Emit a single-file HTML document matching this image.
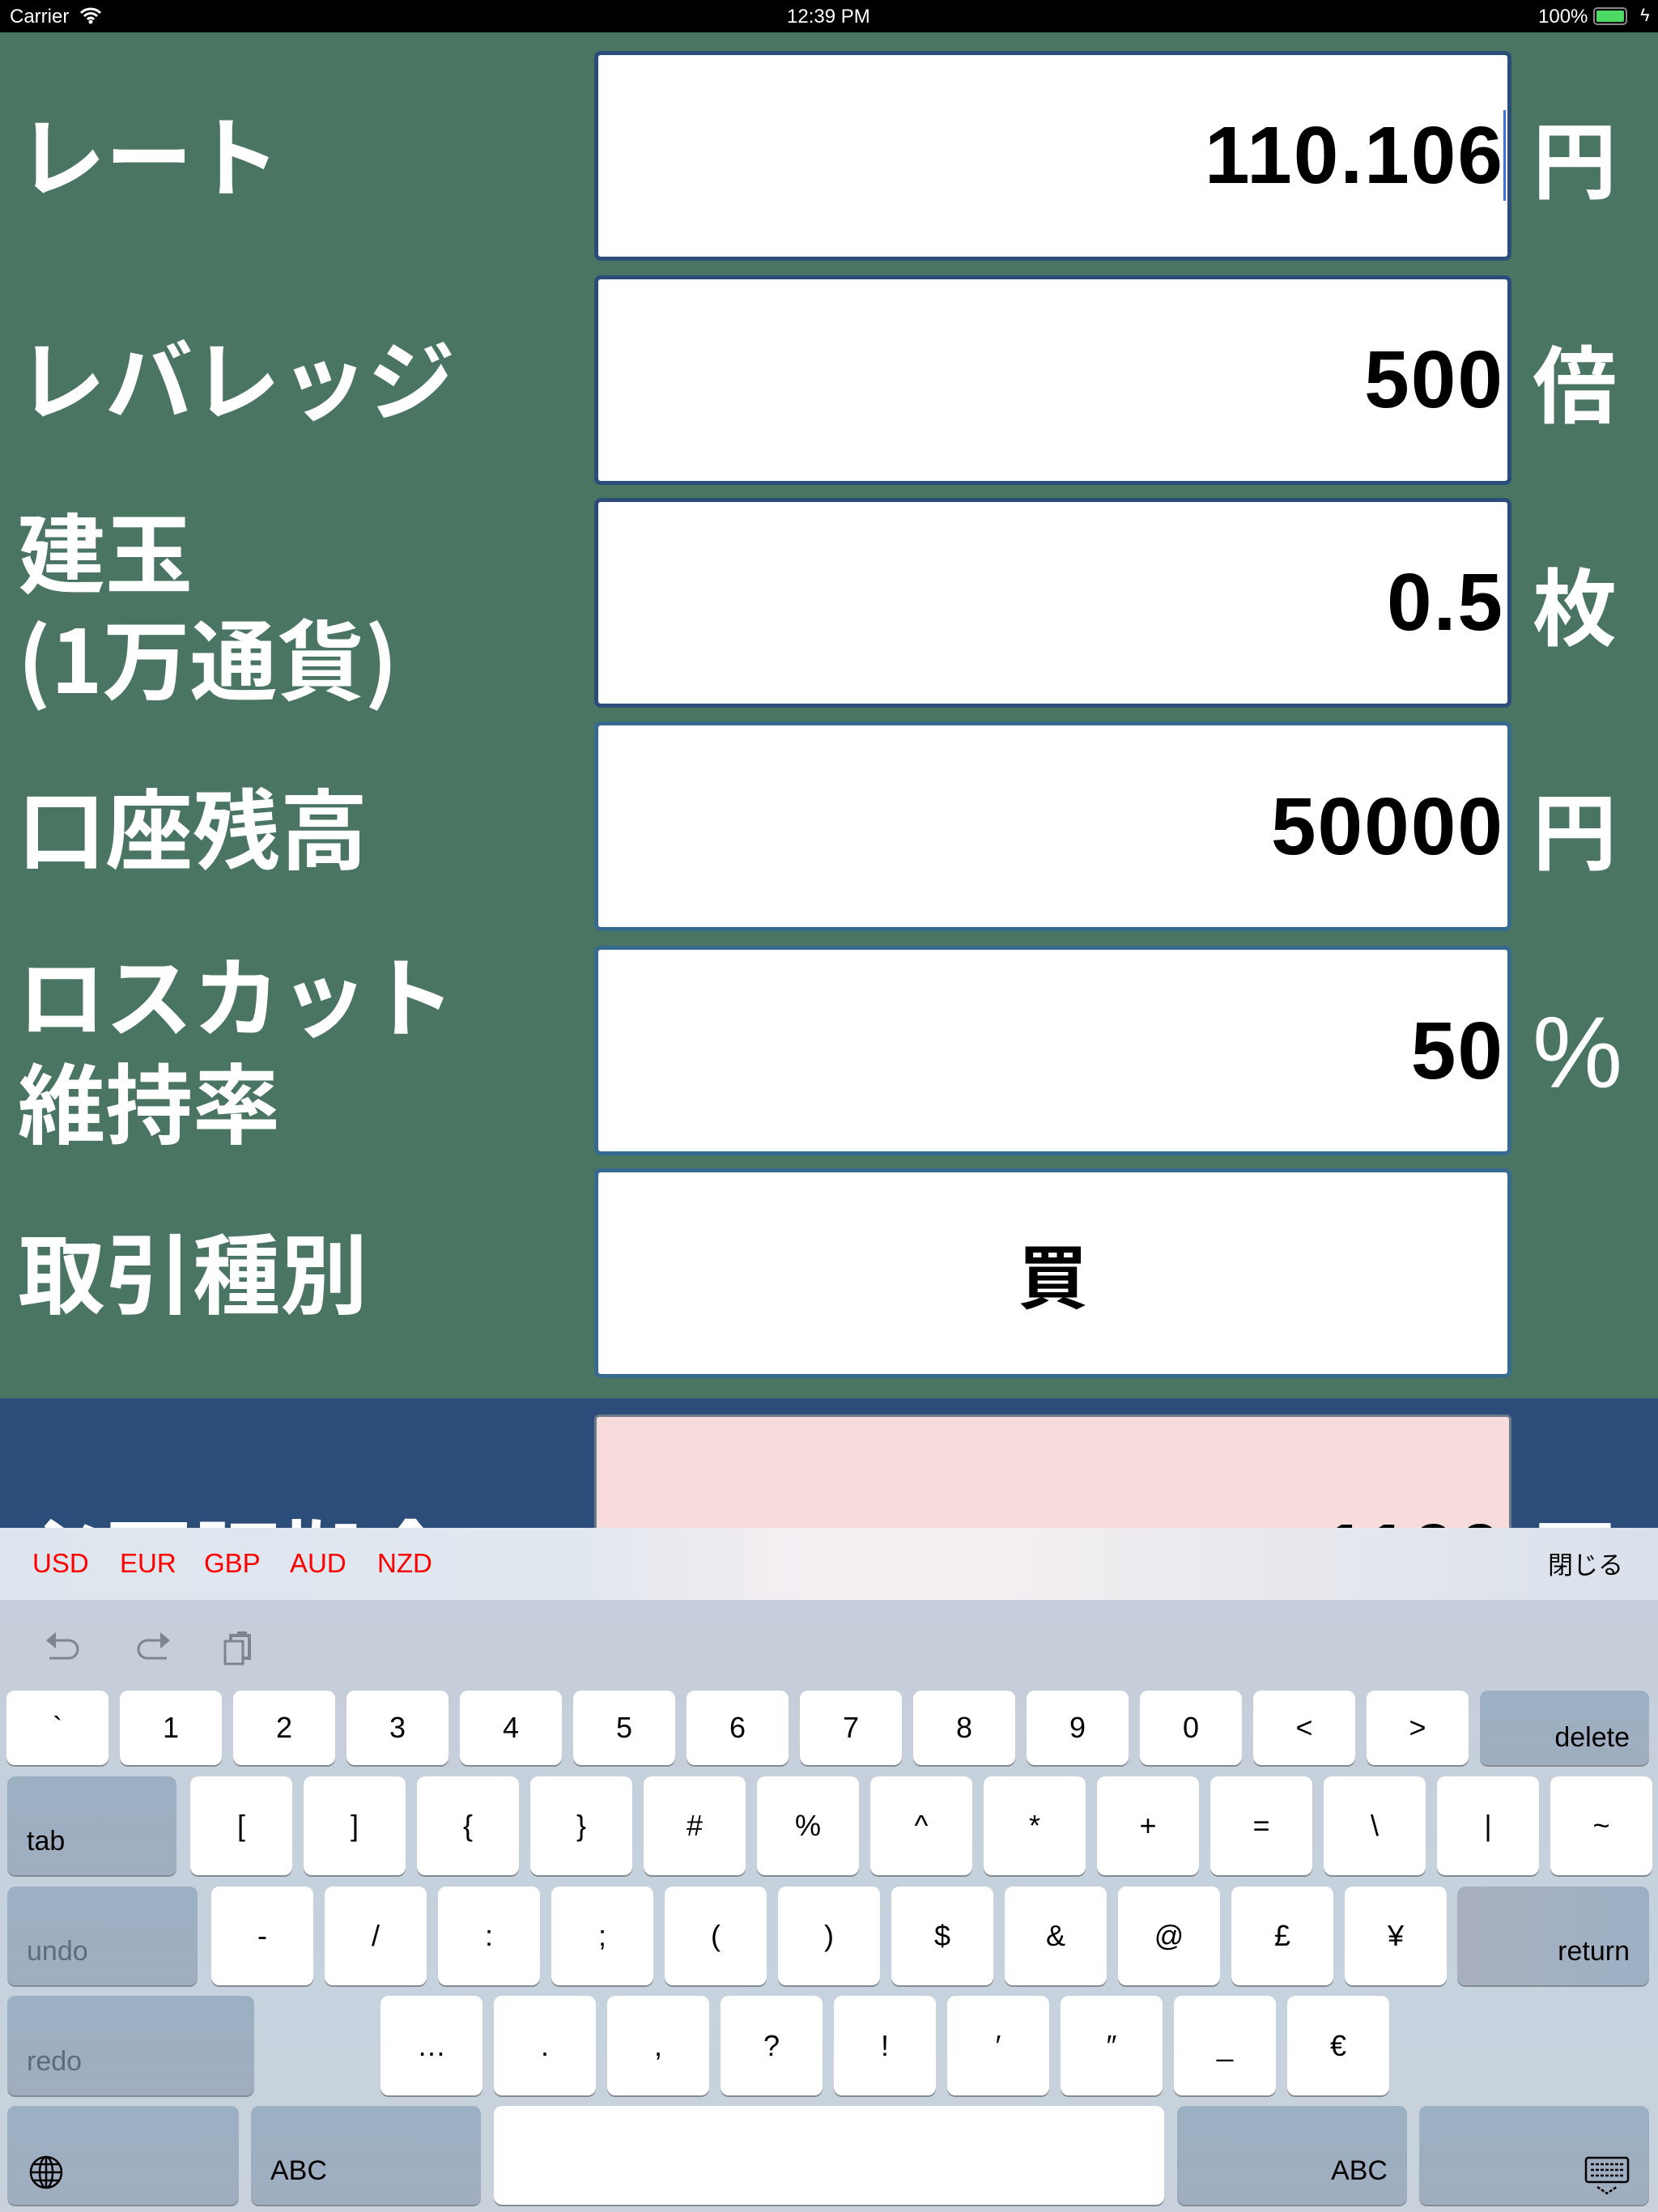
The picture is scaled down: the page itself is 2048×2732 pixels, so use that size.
<!DOCTYPE html>
<html><head><meta charset="utf-8"><style>
*{margin:0;padding:0;box-sizing:border-box}
body{width:2048px;height:2732px;position:relative;overflow:hidden;background:#4a7563;font-family:"Liberation Sans","Noto Sans CJK JP",sans-serif}
.abs{position:absolute}
.sb{left:0;top:0;width:2048px;height:40px;background:#000;color:#fff;font-size:24px}
.lbl{position:absolute;left:22px;color:#fff;font-weight:bold;font-size:108px;line-height:132px;font-family:"Noto Sans CJK JP",sans-serif;white-space:nowrap}
.fld{position:absolute;left:734px;width:1133px;height:259px;background:#fff;border:5px solid #376a8f;border-radius:8px}
.fld.t{border:5px solid #2c4d79}
.val{position:absolute;right:190px;font-size:100px;font-weight:bold;color:#000;line-height:120px;letter-spacing:2px}
.unit{position:absolute;left:1893px;color:#fff;font-weight:bold;font-size:104px;line-height:120px;font-family:"Noto Sans CJK JP",sans-serif}
.kb{left:0;top:1887px;width:2048px;height:845px;background:linear-gradient(180deg,#c6ccd9,#c5d2dd 60%,#c9d2dc)}
.sug{left:0;top:1887px;width:2048px;height:89px;background:linear-gradient(90deg,#dfe5ee 0%,#e2e8f0 35%,#f6eff1 50%,#f4eff1 60%,#e6e8ee 80%,#d8e0ea 100%)}
.k{position:absolute;height:92px;width:126px;background:#fff;border-radius:10px;box-shadow:0 2px 0 #858b93;font-size:36px;color:#000;text-align:center;line-height:92px}
.g{background:linear-gradient(180deg,#9cb0c4,#a0adbe);text-align:left;line-height:normal;font-size:34px}
.g span{position:absolute;bottom:22px;left:24px}
.g span.r{left:auto;right:24px}
</style></head><body>
<div class="abs sb">
<span class="abs" style="left:12px;top:7px">Carrier</span>
<svg class="abs" style="left:98px;top:8px" width="28" height="22" viewBox="0 0 28 22"><path d="M2 8a17 17 0 0 1 24 0M6 12a11 11 0 0 1 16 0M10 16a5 5 0 0 1 8 0" stroke="#fff" stroke-width="3" fill="none"/><circle cx="14" cy="19" r="2.5" fill="#fff"/></svg>
<span class="abs" style="left:972px;top:7px">12:39 PM</span>
<span class="abs" style="left:1900px;top:7px">100%</span>
<div class="abs" style="left:1968px;top:9px;width:42px;height:22px;border:2px solid #888;border-radius:5px;padding:2px"><div style="width:100%;height:100%;background:#4cd964;border-radius:2px"></div></div>
<span class="abs" style="left:2026px;top:6px;font-size:22px">ϟ</span>
</div>

<div class="lbl" style="top:122px">レート</div>
<div class="lbl" style="top:398px">レバレッジ</div>
<div class="lbl" style="top:612px">建玉<br>(1万通貨)</div>
<div class="lbl" style="top:953px">口座残高</div>
<div class="lbl" style="top:1160px">ロスカット<br>維持率</div>
<div class="lbl" style="top:1502px">取引種別</div>

<div class="fld t" style="top:63px"></div>
<div class="val" style="top:132px">110.106</div>
<div class="abs" style="left:1857px;top:136px;width:3px;height:112px;background:#3d6fd8"></div>
<div class="unit" style="top:132px">円</div>

<div class="fld t" style="top:340px"></div>
<div class="val" style="top:409px">500</div>
<div class="unit" style="top:409px">倍</div>

<div class="fld t" style="top:615px"></div>
<div class="val" style="top:684px">0.5</div>
<div class="unit" style="top:684px">枚</div>

<div class="fld" style="top:891px"></div>
<div class="val" style="top:961px">50000</div>
<div class="unit" style="top:961px">円</div>

<div class="fld" style="top:1168px"></div>
<div class="val" style="top:1238px">50</div>
<div class="unit" style="top:1241px;font-family:'Liberation Sans',sans-serif;font-weight:normal;font-size:125px">%</div>

<div class="fld" style="top:1443px"></div>
<div class="abs" style="left:734px;width:1133px;top:1512px;text-align:center;font-size:86px;font-weight:bold;line-height:120px;font-family:'Noto Sans CJK JP',sans-serif">買</div>

<div class="abs" style="left:0;top:1727px;width:2048px;height:200px;background:#2c4d79"></div>
<div class="abs" style="left:734px;top:1747px;width:1133px;height:200px;background:#f8dcdb;border:3px solid #6d7a8a;border-radius:6px"></div>
<div class="lbl" style="top:1856px">必要証拠金</div>
<div class="val" style="top:1858px">1100</div>
<div class="unit" style="top:1858px">円</div>

<div class="abs kb"></div>
<div class="abs sug"></div>
<div class="abs" style="top:1912px;left:40px;font-size:33px;color:#f00">USD</div>
<div class="abs" style="top:1912px;left:148px;font-size:33px;color:#f00">EUR</div>
<div class="abs" style="top:1912px;left:252px;font-size:33px;color:#f00">GBP</div>
<div class="abs" style="top:1912px;left:358px;font-size:33px;color:#f00">AUD</div>
<div class="abs" style="top:1912px;left:466px;font-size:33px;color:#f00">NZD</div>
<div class="abs" style="top:1908px;left:1912px;font-size:31px;color:#000;font-family:'Noto Sans CJK JP',sans-serif">閉じる</div>

<svg class="abs" style="left:55px;top:2010px" width="50" height="50" viewBox="0 0 50 50"><path d="M6 16H30a11 11 0 0 1 0 22H6" stroke="#7d858f" stroke-width="3" fill="none"/><path d="M2 16L14 6V26Z" fill="#7d858f"/></svg>
<svg class="abs" style="left:162px;top:2010px" width="50" height="50" viewBox="0 0 50 50"><path d="M44 16H20a11 11 0 0 0 0 22H44" stroke="#7d858f" stroke-width="3" fill="none"/><path d="M48 16L36 6V26Z" fill="#7d858f"/></svg>
<svg class="abs" style="left:275px;top:2010px" width="40" height="50" viewBox="0 0 40 50"><rect x="3" y="17" width="22" height="28" stroke="#7d858f" stroke-width="3" fill="none"/><path d="M10 17V10H33V38H25" stroke="#7d858f" stroke-width="4" fill="none"/><rect x="18" y="5" width="12" height="7" fill="#7d858f"/></svg>

<div class="k" style="top:2088px;left:8px">`</div>
<div class="k" style="top:2088px;left:148px">1</div>
<div class="k" style="top:2088px;left:288px">2</div>
<div class="k" style="top:2088px;left:428px">3</div>
<div class="k" style="top:2088px;left:568px">4</div>
<div class="k" style="top:2088px;left:708px">5</div>
<div class="k" style="top:2088px;left:848px">6</div>
<div class="k" style="top:2088px;left:988px">7</div>
<div class="k" style="top:2088px;left:1128px">8</div>
<div class="k" style="top:2088px;left:1268px">9</div>
<div class="k" style="top:2088px;left:1408px">0</div>
<div class="k" style="top:2088px;left:1548px">&lt;</div>
<div class="k" style="top:2088px;left:1688px">&gt;</div>
<div class="k g" style="top:2088px;left:1828px;width:209px"><span class="r" style="bottom:14px">delete</span></div>

<div class="k g" style="top:2194px;left:9px;width:209px;height:122px"><span>tab</span></div>
<div class="k" style="top:2194px;height:122px;line-height:122px;left:235px">[</div>
<div class="k" style="top:2194px;height:122px;line-height:122px;left:375px">]</div>
<div class="k" style="top:2194px;height:122px;line-height:122px;left:515px">{</div>
<div class="k" style="top:2194px;height:122px;line-height:122px;left:655px">}</div>
<div class="k" style="top:2194px;height:122px;line-height:122px;left:795px">#</div>
<div class="k" style="top:2194px;height:122px;line-height:122px;left:935px">%</div>
<div class="k" style="top:2194px;height:122px;line-height:122px;left:1075px">^</div>
<div class="k" style="top:2194px;height:122px;line-height:122px;left:1215px">*</div>
<div class="k" style="top:2194px;height:122px;line-height:122px;left:1355px">+</div>
<div class="k" style="top:2194px;height:122px;line-height:122px;left:1495px">=</div>
<div class="k" style="top:2194px;height:122px;line-height:122px;left:1635px">\</div>
<div class="k" style="top:2194px;height:122px;line-height:122px;left:1775px">|</div>
<div class="k" style="top:2194px;height:122px;line-height:122px;left:1915px">~</div>

<div class="k g" style="top:2330px;left:9px;width:235px;height:122px;color:#5d6b7c"><span>undo</span></div>
<div class="k" style="top:2330px;height:122px;line-height:122px;left:261px">-</div>
<div class="k" style="top:2330px;height:122px;line-height:122px;left:401px">/</div>
<div class="k" style="top:2330px;height:122px;line-height:122px;left:541px">:</div>
<div class="k" style="top:2330px;height:122px;line-height:122px;left:681px">;</div>
<div class="k" style="top:2330px;height:122px;line-height:122px;left:821px">(</div>
<div class="k" style="top:2330px;height:122px;line-height:122px;left:961px">)</div>
<div class="k" style="top:2330px;height:122px;line-height:122px;left:1101px">$</div>
<div class="k" style="top:2330px;height:122px;line-height:122px;left:1241px">&amp;</div>
<div class="k" style="top:2330px;height:122px;line-height:122px;left:1381px">@</div>
<div class="k" style="top:2330px;height:122px;line-height:122px;left:1521px">£</div>
<div class="k" style="top:2330px;height:122px;line-height:122px;left:1661px">¥</div>
<div class="k g" style="top:2330px;left:1800px;width:237px;height:122px;background:linear-gradient(90deg,#a8afbe,#9cb0c4)"><span class="r">return</span></div>

<div class="k g" style="top:2465px;left:9px;width:305px;height:123px;color:#5d6b7c"><span>redo</span></div>
<div class="k" style="top:2465px;height:123px;line-height:123px;left:470px">…</div>
<div class="k" style="top:2465px;height:123px;line-height:123px;left:610px">.</div>
<div class="k" style="top:2465px;height:123px;line-height:123px;left:750px">,</div>
<div class="k" style="top:2465px;height:123px;line-height:123px;left:890px">?</div>
<div class="k" style="top:2465px;height:123px;line-height:123px;left:1030px">!</div>
<div class="k" style="top:2465px;height:123px;line-height:123px;left:1170px">′</div>
<div class="k" style="top:2465px;height:123px;line-height:123px;left:1310px">″</div>
<div class="k" style="top:2465px;height:123px;line-height:123px;left:1450px">_</div>
<div class="k" style="top:2465px;height:123px;line-height:123px;left:1590px">€</div>

<div class="k g" style="top:2601px;left:9px;width:286px;height:122px"><svg class="abs" style="left:26px;bottom:18px" width="44" height="44" viewBox="0 0 44 44" fill="none" stroke="#000" stroke-width="2.5"><circle cx="22" cy="22" r="19"/><ellipse cx="22" cy="22" rx="8" ry="19"/><path d="M3 22H41M6 12H38M6 32H38M22 3V41"/></svg></div>
<div class="k g" style="top:2601px;left:310px;width:284px;height:122px"><span>ABC</span></div>
<div class="k" style="top:2601px;left:610px;width:828px;height:122px"></div>
<div class="k g" style="top:2601px;left:1454px;width:284px;height:122px"><span class="r">ABC</span></div>
<div class="k g" style="top:2601px;left:1753px;width:284px;height:122px"><svg class="abs" style="right:24px;bottom:10px" width="56" height="50" viewBox="0 0 56 50" fill="none" stroke="#000" stroke-width="2.5"><rect x="2" y="2" width="52" height="30" rx="3"/><path d="M8 10h40M8 17h40M8 24h40M16 38l12 8 12-8" stroke-dasharray="4 2"/></svg></div>
</body></html>
